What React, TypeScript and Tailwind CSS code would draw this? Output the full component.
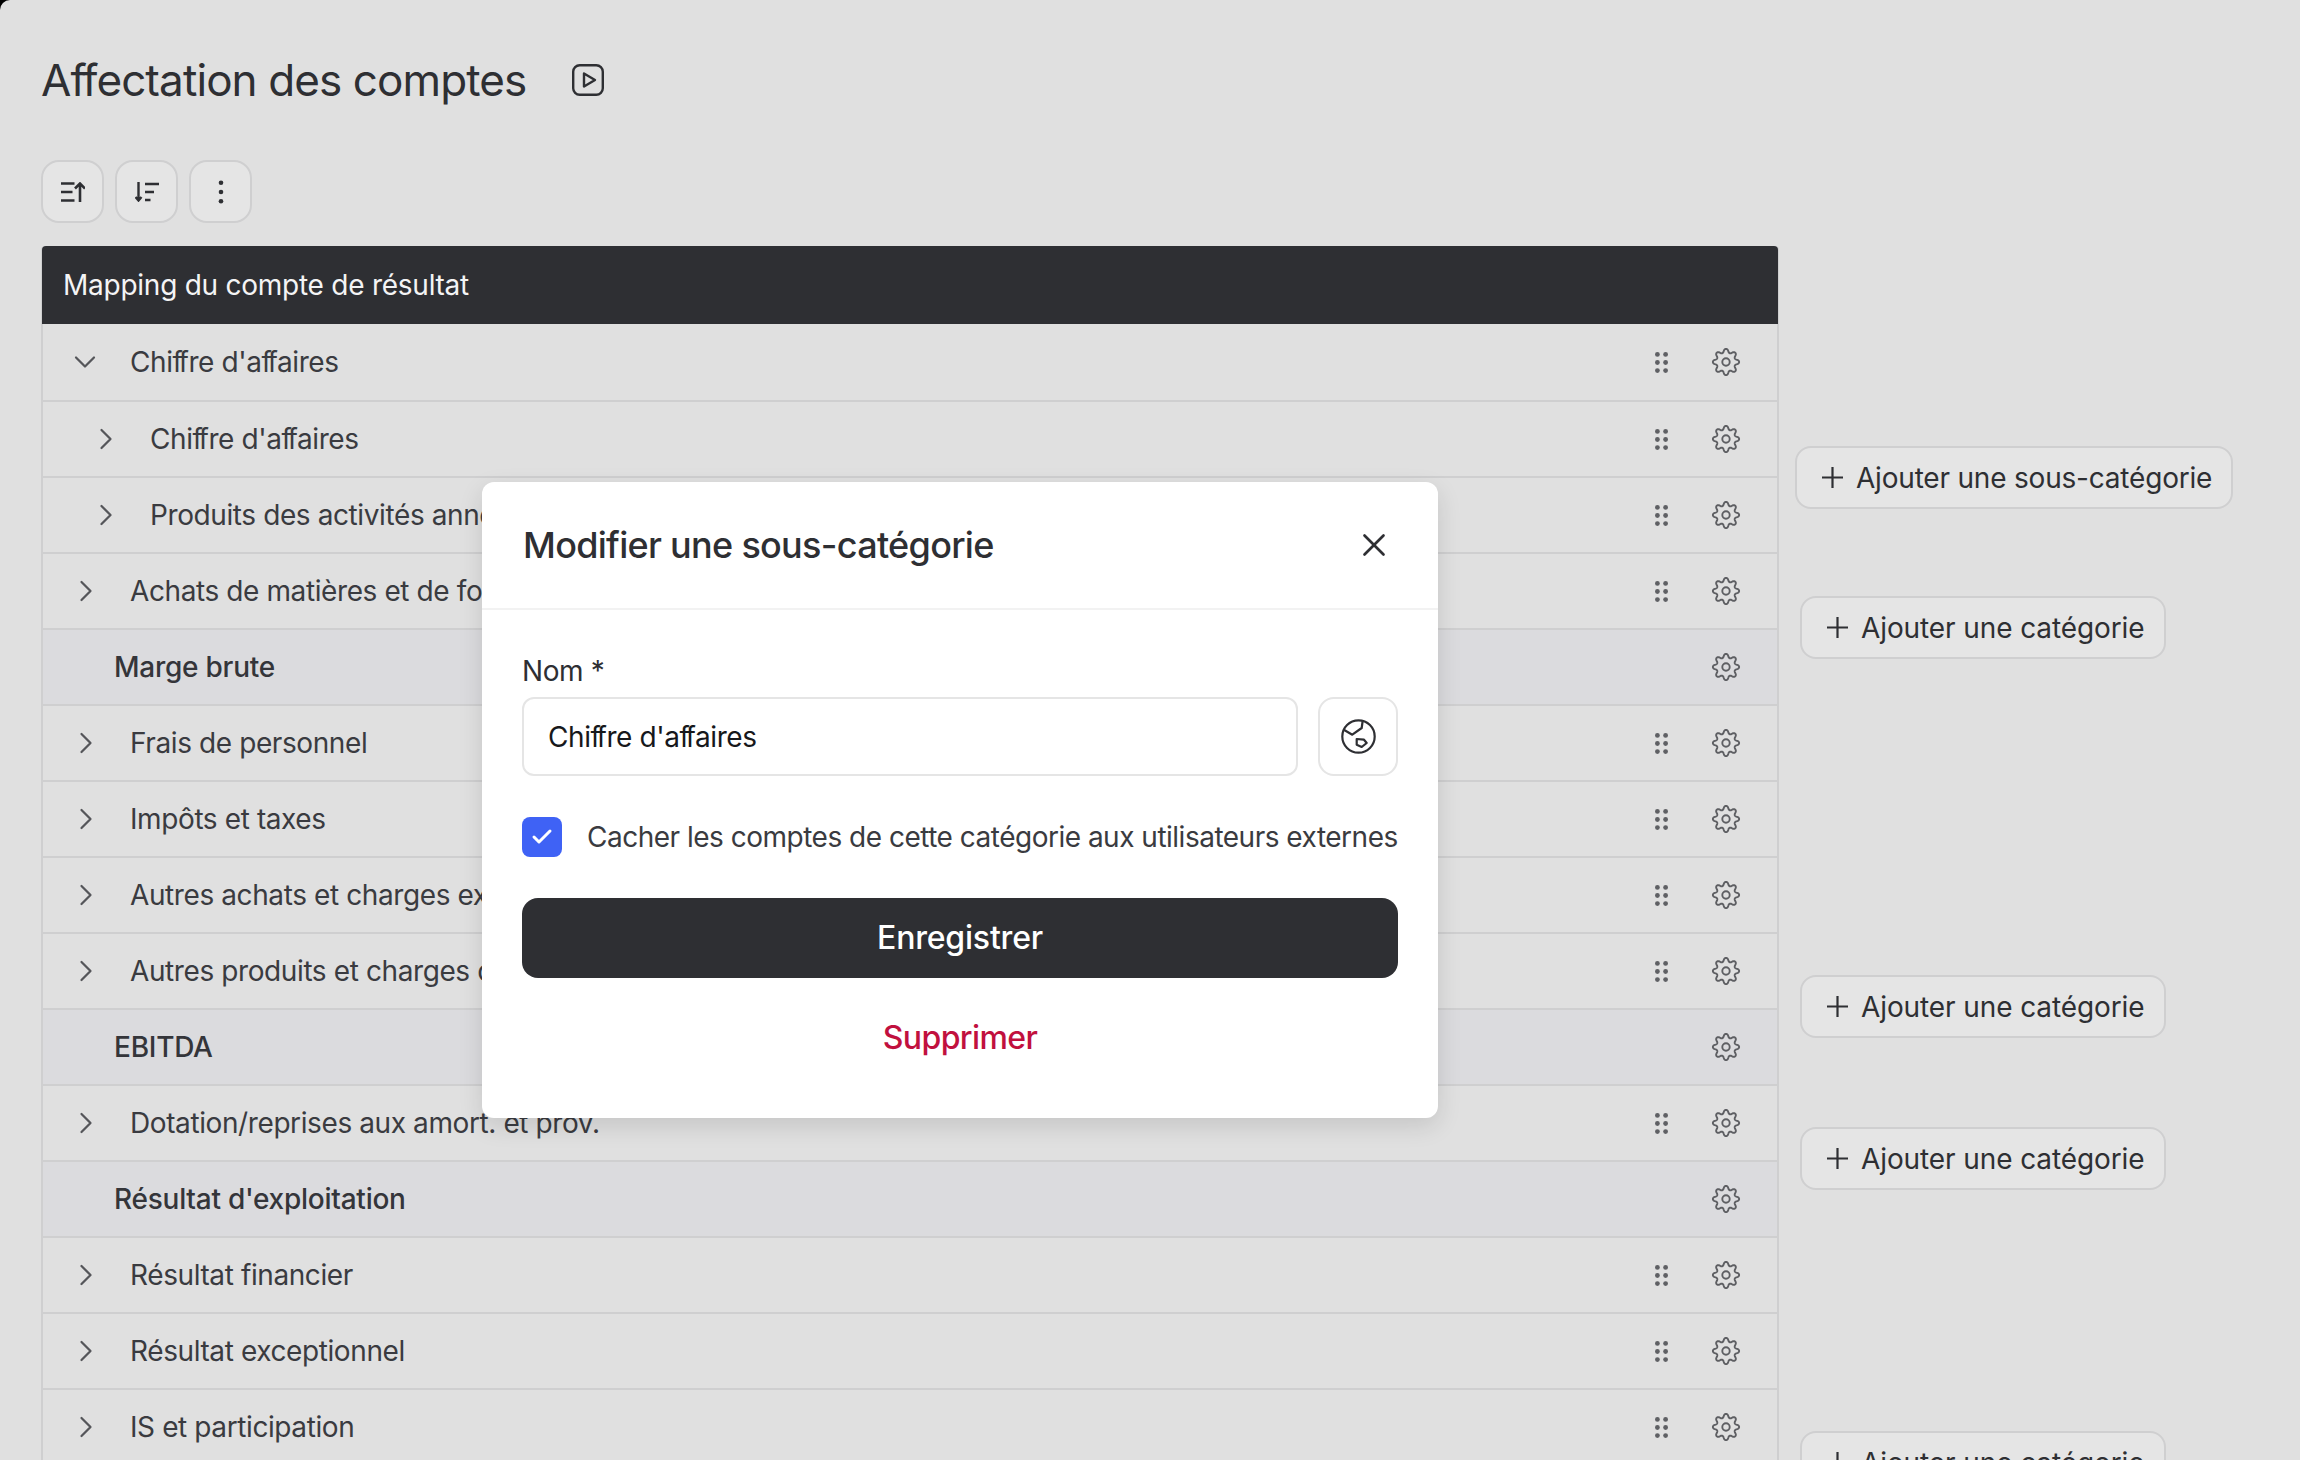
import { ChevronDown, ChevronRight, X, Check } from "lucide-react";
import type { ReactNode } from "react";

type Row = { label: string; kind: "open" | "closed" | "sub" | "section" };

const rows: Row[] = [
  { label: "Chiffre d'affaires", kind: "open" },
  { label: "Chiffre d'affaires", kind: "sub" },
  { label: "Produits des activités annexes", kind: "sub" },
  { label: "Achats de matières et de fournitures", kind: "closed" },
  { label: "Marge brute", kind: "section" },
  { label: "Frais de personnel", kind: "closed" },
  { label: "Impôts et taxes", kind: "closed" },
  { label: "Autres achats et charges externes", kind: "closed" },
  { label: "Autres produits et charges d'exploitation", kind: "closed" },
  { label: "EBITDA", kind: "section" },
  { label: "Dotation/reprises aux amort. et prov.", kind: "closed" },
  { label: "Résultat d'exploitation", kind: "section" },
  { label: "Résultat financier", kind: "closed" },
  { label: "Résultat exceptionnel", kind: "closed" },
  { label: "IS et participation", kind: "closed" },
];

function Lig({ text }: { text: string }) {
  const parts = text.split("ff");
  return (
    <>
      {parts.map((p, i) => (
        <span key={i}>
          {i > 0 && "f"}
          {p}
          {i < parts.length - 1 && <span className="tracking-[-4.5px]">f</span>}
        </span>
      ))}
    </>
  );
}

const gearPath = (() => {
  const pts: string[] = [];
  const n = 160;
  for (let i = 0; i < n; i++) {
    const a = (i / n) * Math.PI * 2 - Math.PI / 2;
    const w = Math.cos(8 * (a + Math.PI / 2));
    const s = Math.sign(w) * Math.pow(Math.abs(w), 0.7);
    const r = 11.3 + 1.8 * s;
    pts.push(`${(15 + r * Math.cos(a)).toFixed(2)} ${(15 + r * Math.sin(a)).toFixed(2)}`);
  }
  return "M" + pts.join("L") + "Z";
})();

function Gear() {
  return (
    <svg width="30" height="30" viewBox="0 0 30 30" fill="none" stroke="#5e5f63" strokeWidth="1.900" strokeLinejoin="round" className="shrink-0">
      <path d={gearPath} />
      <circle cx="15" cy="15" r="3.700" />
    </svg>
  );
}

function Grip() {
  return (
    <svg width="13" height="21" viewBox="0 0 13 21" fill="#5f6064" className="shrink-0">
      <circle cx="2.400" cy="2.400" r="2.400" />
      <circle cx="10.600" cy="2.400" r="2.400" />
      <circle cx="2.400" cy="10.500" r="2.400" />
      <circle cx="10.600" cy="10.500" r="2.400" />
      <circle cx="2.400" cy="18.600" r="2.400" />
      <circle cx="10.600" cy="18.600" r="2.400" />
    </svg>
  );
}

function TableRow({ row, first }: { row: Row; first: boolean }) {
  const section = row.kind === "section";
  return (
    <div
      className={`flex items-center shrink-0 border-b-2 border-[#cfcfd0] ${first ? "h-[78px]" : "h-[76px]"} ${section ? "bg-[#dbdbde]" : ""}`}
    >
      {section && (
        <span className="ml-[71px] text-[28px] font-medium tracking-[-0.25px] text-[#34353a]">{row.label}</span>
      )}
      {row.kind === "sub" && (
        <>
          <ChevronRight className="ml-[45px] w-[36px] h-[36px] text-[#55565a]" strokeWidth={1.5} />
          <span className="ml-[26px] text-[28px] tracking-[-0.4px] text-[#3a3b40]"><Lig text={row.label} /></span>
        </>
      )}
      {row.kind === "closed" && (
        <>
          <ChevronRight className="ml-[25px] w-[36px] h-[36px] text-[#55565a]" strokeWidth={1.5} />
          <span className="ml-[26px] text-[28px] tracking-[-0.4px] text-[#3a3b40]">{row.label}</span>
        </>
      )}
      {row.kind === "open" && (
        <>
          <ChevronDown className="ml-[24px] w-[36px] h-[36px] text-[#55565a]" strokeWidth={1.5} />
          <span className="ml-[27px] text-[28px] tracking-[-0.4px] text-[#3a3b40]"><Lig text={row.label} /></span>
        </>
      )}
      <div className="ml-auto flex items-center mr-[36px]">
        {!section && <Grip />}
        <span className="ml-[43px]"><Gear /></span>
      </div>
    </div>
  );
}

function AddButton({ label, className, sub }: { label: string; className: string; sub?: boolean }) {
  return (
    <button className={`h-[63px] flex items-center rounded-[16px] border-2 border-[#cfcfd0] bg-[#e5e5e5] pl-[25px] text-[28px] text-[#2e2f33] whitespace-nowrap ${sub ? "pr-[19px] tracking-[-0.2px]" : "pr-[19px] tracking-[-0.1px]"} ${className}`}>
      <svg width="21" height="21" viewBox="0 0 21 21" stroke="#2e2f33" strokeWidth="2.200" className="mr-[13px] shrink-0">
        <path d="M10.500 0v21M0 10.500h21" />
      </svg>
      {label}
    </button>
  );
}

function IconButton({ children }: { children: ReactNode }) {
  return (
    <button className="w-[63px] h-[63px] flex items-center justify-center rounded-[18px] border-2 border-[#cfcfd0] bg-[#e5e5e5] text-[#2e2f33]">
      {children}
    </button>
  );
}

export default function App() {
  return (
    <div className="bg-black w-[2300px] h-[1460px]">
      <div
        className="relative w-[2300px] h-[1460px] overflow-hidden rounded-tl-[10px] bg-[#e0e0e0] pl-[41px] pt-[50px]"
        style={{ fontFamily: "Inter, 'Noto Sans', sans-serif" }}
      >
        <div className="flex items-center h-[60px]">
          <h1 className="text-[44px] font-normal tracking-[-0.9px] text-[#2e2f33]"><Lig text="Affectation des comptes" /></h1>
          <svg className="ml-[46px]" width="32" height="32" viewBox="0 0 32 32" fill="none" stroke="#2e2f33" strokeWidth="2.400" strokeLinejoin="round">
            <rect x="1.200" y="1.200" width="29.600" height="29.600" rx="6.500" />
            <path d="M12 9.500 L23 16 L12 22.500 Z" />
          </svg>
        </div>

        <div className="flex gap-[11px] mt-[50px]">
          <IconButton>
            <svg width="24" height="20" viewBox="0 0 24 20" fill="none" stroke="#2e2f33" strokeWidth="2.300">
              <path d="M0 1.500h13.500M0 10h11.500M0 18.500h13.500" />
              <path d="M19 20V1.500M14 6.500l5-5 5 5" strokeWidth="2.600" />
            </svg>
          </IconButton>
          <IconButton>
            <svg width="24" height="20" viewBox="0 0 24 20" fill="none" stroke="#2e2f33" strokeWidth="2.300">
              <path d="M3.500 0v18.500M0.500 15l3 3.500 3-3.500" strokeWidth="2.400" />
              <path d="M10 2h14M10 10h9M10 18h5.500" />
            </svg>
          </IconButton>
          <IconButton>
            <svg width="6" height="24" viewBox="0 0 6 24" fill="#2e2f33">
              <circle cx="3" cy="2.700" r="2.300" />
              <circle cx="3" cy="12" r="2.300" />
              <circle cx="3" cy="21.300" r="2.300" />
            </svg>
          </IconButton>
        </div>

        <div className="flex mt-[23px] items-start">
          <div className="w-[1738px] h-[1300px] shrink-0 border-x-2 border-[#cfcfd0] rounded-t-[4px] flex flex-col">
            <div className="h-[78px] shrink-0 -mx-[1px] bg-[#2e2f33] rounded-t-[4px] flex items-center pl-[21px] text-[28px] tracking-[-0.25px] text-[#f4f4f5]">
              Mapping du compte de résultat
            </div>
            {rows.map((r, i) => (
              <TableRow key={i} row={r} first={i === 0} />
            ))}
          </div>
          <div className="flex flex-col items-start">
            <AddButton sub label="Ajouter une sous-catégorie" className="mt-[200px] ml-[16px]" />
            <AddButton label="Ajouter une catégorie" className="mt-[87px] ml-[21px]" />
            <AddButton label="Ajouter une catégorie" className="mt-[316px] ml-[21px]" />
            <AddButton label="Ajouter une catégorie" className="mt-[89px] ml-[21px]" />
            <AddButton label="Ajouter une catégorie" className="mt-[241px] ml-[21px]" />
          </div>
        </div>

        <div className="absolute left-[482px] top-[482px] w-[956px] h-[636px] bg-white rounded-[12px] shadow-[0_8px_24px_rgba(0,0,0,0.12)] flex flex-col">
          <div className="h-[128px] shrink-0 border-b-2 border-[#f2f2f2] flex items-center justify-between pl-[41px] pr-[45px]">
            <span className="text-[36px] font-medium tracking-[-0.7px] text-[#2e2f33]">Modifier une sous-catégorie</span>
            <X className="w-[38px] h-[38px] text-[#2e2f33]" strokeWidth={1.7} />
          </div>
          <div className="px-[40px] flex flex-col">
            <label className="mt-[44px] text-[28px] leading-[34px] tracking-[-0.4px] text-[#2e2f33]">Nom *</label>
            <div className="flex mt-[9px] gap-[20px]">
              <div className="flex-1 h-[79px] rounded-[12px] border-2 border-[#e5e5e5] flex items-center pl-[24px] text-[28px] tracking-[-0.4px] text-[#17181b]">
                <span><Lig text="Chiffre d'affaires" /></span>
              </div>
              <div className="w-[80px] h-[79px] rounded-[16px] border-2 border-[#e5e5e5] flex items-center justify-center">
                <svg width="35" height="35" viewBox="0 0 35 35" fill="none" stroke="#2e2f33" strokeWidth="2.200" strokeLinejoin="round">
                  <circle cx="17.500" cy="17.500" r="16.200" />
                  <path d="M21.700 1.500 L20.700 9 L11.300 15.700 L2.800 10.700" />
                  <path d="M15.700 20 L23 20.700 L25.700 24 L20.700 28 L15.700 25.700 Z" />
                </svg>
              </div>
            </div>
            <div className="flex items-center mt-[41px]">
              <div className="w-[40px] h-[40px] shrink-0 rounded-[8px] bg-[#3f62f5] flex items-center justify-center">
                <Check className="w-[24px] h-[24px] text-white" strokeWidth={3} />
              </div>
              <span className="ml-[25px] text-[28px] leading-[40px] tracking-[-0.5px] text-[#3a3b40] whitespace-nowrap">Cacher les comptes de cette catégorie aux utilisateurs externes</span>
            </div>
            <button className="mt-[41px] h-[80px] rounded-[16px] bg-[#2e2f33] text-white text-[32px] font-medium tracking-[-0.2px]">Enregistrer</button>
            <button className="mt-[20px] h-[80px] text-[#c1103e] text-[32px] font-medium tracking-[-0.6px]">Supprimer</button>
          </div>
        </div>
      </div>
    </div>
  );
}
